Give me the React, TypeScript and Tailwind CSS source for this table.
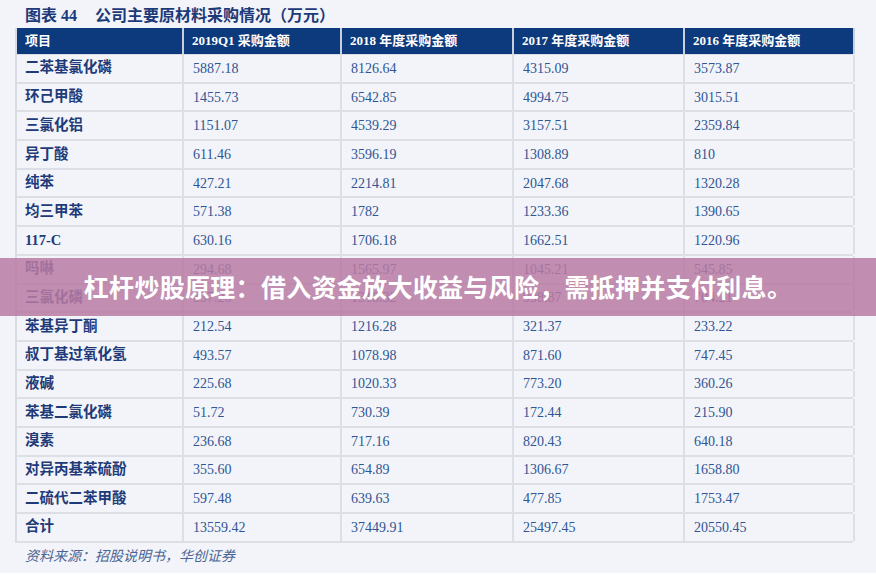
import React from "react";

type Row = [string, string, string, string, string];

const rows: Row[] = [
  ["二苯基氯化磷", "5887.18", "8126.64", "4315.09", "3573.87"],
  ["环己甲酸", "1455.73", "6542.85", "4994.75", "3015.51"],
  ["三氯化铝", "1151.07", "4539.29", "3157.51", "2359.84"],
  ["异丁酸", "611.46", "3596.19", "1308.89", "810"],
  ["纯苯", "427.21", "2214.81", "2047.68", "1320.28"],
  ["均三甲苯", "571.38", "1782", "1233.36", "1390.65"],
  ["117-C", "630.16", "1706.18", "1662.51", "1220.96"],
  ["吗啉", "294.68", "1565.97", "1045.21", "545.85"],
  ["三氯化磷", "337.26", "1318.32", "998.87", "704.21"],
  ["苯基异丁酮", "212.54", "1216.28", "321.37", "233.22"],
  ["叔丁基过氧化氢", "493.57", "1078.98", "871.60", "747.45"],
  ["液碱", "225.68", "1020.33", "773.20", "360.26"],
  ["苯基二氯化磷", "51.72", "730.39", "172.44", "215.90"],
  ["溴素", "236.68", "717.16", "820.43", "640.18"],
  ["对异丙基苯硫酚", "355.60", "654.89", "1306.67", "1658.80"],
  ["二硫代二苯甲酸", "597.48", "639.63", "477.85", "1753.47"],
  ["合计", "13559.42", "37449.91", "25497.45", "20550.45"],
];

const headers = ["项目", "2019Q1 采购金额", "2018 年度采购金额", "2017 年度采购金额", "2016 年度采购金额"];

const serif = "font-['Liberation_Serif','Noto_Sans_CJK_SC',serif]";
const cols = "grid grid-cols-[167px_158px_172px_171px_170px]";

export default function App() {
  return (
    <div className={`relative w-[876px] h-[575px] bg-white overflow-hidden ${serif}`}>
      <div className="h-[573px] bg-[#f2f4f9] pt-[4px]">
        <div className="pl-[25px] h-[23px] flex items-center text-[16px] font-bold text-[#1d3a78] leading-none">
          <span>图表 44</span>
          <span className="ml-[18px]">公司主要原材料采购情况（万元）</span>
        </div>

        <div className="ml-[15px] mt-[1px] w-[838px] border-l-2 border-[#d9dce3]">
          <div className={`${cols} h-[27px] bg-[#0d3a7c] border-b border-[#d9dce3]`}>
            {headers.map((h) => (
              <div
                key={h}
                className="flex items-center pl-[8px] border-r-2 border-[#c9d0dd] text-white font-bold text-[13px]"
              >
                {h}
              </div>
            ))}
          </div>
          {rows.map((r) => (
            <div key={r[0]} className={`${cols} h-[28.7px] border-b-2 border-[#dcdfe5]`}>
              {r.map((c, i) => (
                <div
                  key={i}
                  className={
                    i === 0
                      ? "flex items-center pl-[8px] border-r-2 border-[#dcdfe5] text-[#1f3a78] font-bold text-[14.5px]"
                      : "flex items-center pl-[9px] border-r-2 border-[#dcdfe5] text-[#2f5594] text-[14px]"
                  }
                >
                  {c}
                </div>
              ))}
            </div>
          ))}
        </div>

        <div className="pl-[25px] pt-[3px] text-[14px] italic text-[#4a6595]">
          资料来源：招股说明书，华创证券
        </div>
      </div>

      <div className="absolute left-0 top-[258px] w-full h-[58px] bg-[#b87aa3]/85 flex items-center justify-center">
        <span className="text-white font-bold text-[25px] font-['Noto_Sans_CJK_SC',sans-serif] tracking-[0.3px]">
          杠杆炒股原理：借入资金放大收益与风险，需抵押并支付利息。
        </span>
      </div>
    </div>
  );
}
